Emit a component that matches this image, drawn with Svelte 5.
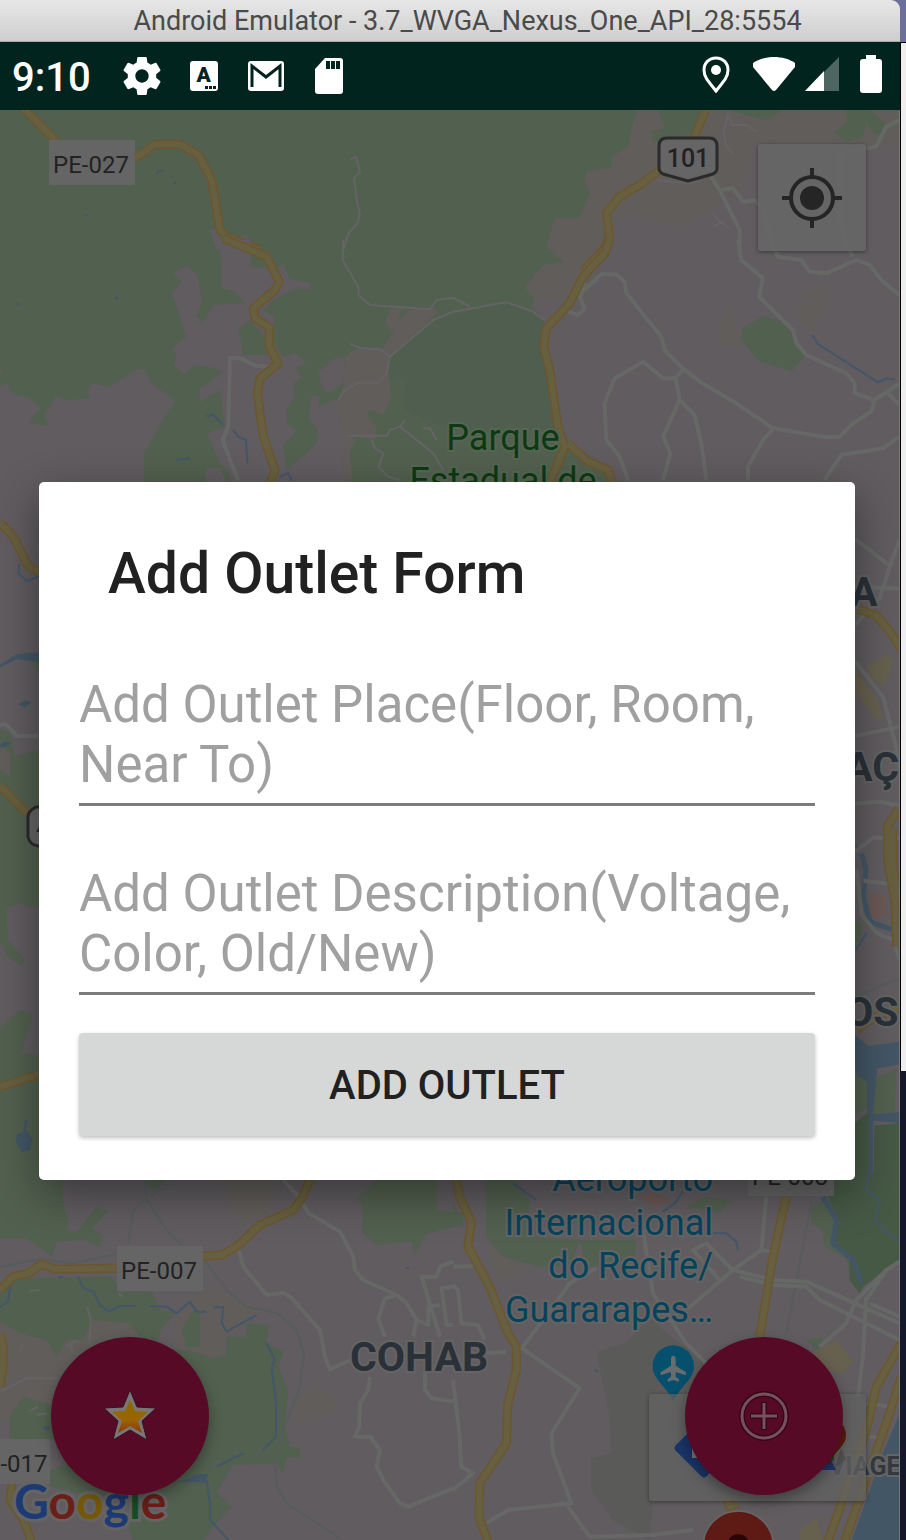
<script>
  let place = $state('');
  let description = $state('');

  // Map artwork, split into sheets. Each sheet keeps its own drawing units.
  const sheets = [
    {
      at: 'translate(0 0) scale(.3333)',
      fills: [
        ['green', 'M0 320L1915 320 1914 340 1899 370 1884 440 1834 470 1839 500 1759 515 1754 550 1771 575 1739 655 1664 655 1657 690 1639 740 1694 788 1674 805 1634 792 1574 860 1604 890 1599 925 1634 960 1621 1050 1649 1110 1680 1290 1710 1330 1840 1410 1840 1460 0 1460Z'],
        ['park', 'M1170 1075L1300 960 1519 907 1634 960 1624 1050 1679 1290 1359 1290 1210 1230 1220 1140 1165 1140Z'],
        ['sand', 'M1914 325L2699 325 2699 440 2259 430 2229 560 2049 680 1919 650 1859 660 1759 900 1604 900 1574 860 1634 792 1694 788 1639 740 1664 655 1739 655 1771 575 1754 550 1759 515 1839 500 1834 470 1884 440 1899 370Z'],
        ['green', 'M1975 330L2100 330 2080 400 1960 430 1955 395 1995 385Z'],
        ['land', 'M630 690L655 685 685 715 740 705 765 740 750 760 650 750Z']
      ],
      thin: ['M1050 480L1068 470 1080 515 1062 535 1072 610 1080 640 1072 670 1045 700 1030 750'],
      minor: [], rail: [],
      water: ['M470 522L478 512 490 512', 'M522 545L528 552', 'M255 644L265 648'],
      major: ['M65 320L165 420 230 500', 'M405 475L465 433 540 433 595 465 635 540 660 690 680 710 780 750']
    },
    {
      at: 'translate(453 0) scale(.3333)',
      fills: [
        ['green', 'M830 330L990 330 940 360 880 345Z'],
        ['green', 'M1180 330L1250 330 1310 380 1270 405 1240 370 1230 410 1185 425 1140 400 1185 365Z']
      ],
      thin: ['M825 340L812 400 820 440 840 460M825 350L840 375 880 375 910 395M610 540L700 550 740 545', 'M780 640L800 665 830 685M780 680L810 665'],
      minor: ['M775 530L805 580 860 690 860 770', 'M805 570L840 565 870 605 905 600 930 630 950 700 975 770', 'M1340 360L1300 380 1270 440 1160 460 1160 650 1180 730 1200 770'],
      rail: [], water: [],
      major: ['M762 320L718 425 620 510 560 555 500 590 460 640 470 710 455 745 390 815']
    },
    {
      at: 'translate(0 240) scale(.3333)',
      fills: [
        ['land', 'M0 440L20 430 40 465 75 468 125 500 85 548 145 558 133 525 168 468 200 480 275 475 258 455 280 428 328 442 410 388 432 388 455 432 528 482 500 520 432 640 432 750 0 750Z'],
        ['land', 'M520 98L560 78 595 105 606 190 590 225 608 250 640 195 735 190 705 155 665 145 662 20 650 0 750 0 755 80 800 85 850 75 870 115 930 128 932 150 885 145 820 180 790 210 825 232 815 300 850 350 885 340 920 365 885 385 905 410 883 430 880 480 860 505 860 550 892 570 850 615 860 690 950 610 950 560 925 535 935 465 958 468 955 500 1015 475 1035 750 700 750 690 700 660 670 620 580 675 560 660 450 600 487 600 445 668 400 640 383 582 375 555 403 520 375 530 350 518 325 558 290 515 155 545 125Z'],
        ['green', 'M715 265L750 240 800 300 800 345 730 345 722 300Z'],
        ['land', 'M955 395L1005 355 1035 352 1030 430 985 460 965 440Z'],
        ['land', 'M610 750L620 685 660 685 690 750Z'],
        ['sand', 'M1145 328L1180 280 1155 250 1170 205 1205 205 1195 240 1230 210 1300 200 1310 220 1170 350 1165 400 1175 470 1150 525 1110 510 1100 530 1130 560 1125 600 1070 590 1050 640 1060 740 1035 740 1020 560 1015 480 1030 440 1035 350 1070 325Z'],
        ['land', 'M0 388L12 392 0 400Z']
      ],
      thin: [
        'M1030 0L1028 60 1075 140 1075 165 1110 195 1290 208 1310 180 1359 173 1409 200',
        'M1634 240L1594 212 1519 187 1359 215 1300 240 1170 350 1140 328 1085 325 1050 312M1170 350L1160 400 1135 428 1075 428 1030 455 1015 480',
        'M1040 587L1160 587 1170 570 1200 560 1215 540M1200 560L1250 600 1300 640 1330 690M1115 600L1125 625 1150 640 1135 680 1165 710 1200 720M1270 565L1290 565 1310 600'
      ],
      minor: ['M715 720L690 660 668 600 685 560 690 355 720 355 770 378 815 380'],
      rail: [],
      water: ['M618 528L640 525 670 555M700 570L715 590 738 600 742 670M530 660L570 655M838 710L865 700 875 720', 'M50 188L55 196M345 175L355 172'],
      major: ['M670 -5L730 20 800 50 838 125 825 150 760 205 765 235 808 262 808 320 835 370 780 415 772 460 790 590 825 690 810 730']
    },
    {
      at: 'translate(453 240) scale(.3333)',
      fills: [
        ['green', 'M870 265L930 228 985 245 1020 285 1055 350 1015 393 920 365 865 300Z'],
        ['sand', 'M830 190L865 325 790 315Z'],
        ['sand', 'M1020 160L1130 135 1130 195 1075 280 1015 205 1090 190Z']
      ],
      thin: [],
      minor: [
        'M855 0L865 60 930 115 918 170 1020 270 1030 310 1060 345 1180 400 1205 430 1205 460 1265 480 1340 430',
        'M950 0L975 50 1045 60 1070 95 1120 100 1210 60 1250 75 1290 125 1340 165',
        'M395 150L445 103 490 103 515 125 520 160 625 290 635 330 690 385 740 425 850 490 960 565 1120 592 1160 590 1200 550 1255 515 1265 480',
        'M345 215L375 225 395 205 380 170 400 130',
        'M525 720L500 650 460 600 455 490 485 415 570 365 630 415 665 415 690 390',
        'M668 415L680 480 630 590 652 640 630 720M680 480L725 525 745 610 760 720',
        'M960 568L930 600 885 680 885 720M1340 590L1290 625 1165 645 1115 720M1300 455L1340 495'
      ],
      rail: [],
      water: ['M1078 285L1095 312 1275 427 1300 415 1325 418'],
      major: ['M470 0L455 40 390 110 350 190 280 265 272 320 290 390 315 560 335 620 290 730', 'M345 610L405 665 465 690 478 730']
    },
    {
      at: 'translate(0 480) scale(.3333 .4529)',
      fills: [
        ['green', 'M0 550L30 560 45 610 118 595 200 600 200 900 110 945 60 935 20 945 22 1010 0 1030Z'],
        ['green', 'M0 1010L30 1020 75 1060 65 1075 20 1050Z'],
        ['green', 'M0 1210L60 1170 100 1180 65 1265 118 1270 190 1280 190 1568 0 1568Z'],
        ['sand', 'M0 590L30 600 30 655 0 640Z'],
        ['green', 'M90 405L118 380 118 425Z'],
        ['lake', 'M0 408L50 385 118 380 118 402 50 396 0 414Z'],
        ['lake', 'M55 495L75 487 95 490 75 503Z'],
        ['lake', 'M0 585L15 577 35 580 15 590 0 590Z'],
        ['lake', 'M75 1410L83 1415 78 1435 97 1455 90 1480 65 1485 48 1460 50 1445 70 1440Z']
      ],
      thin: [],
      minor: ['M0 540L20 540 50 565 118 565'],
      rail: [],
      water: ['M58 185L55 205 80 223 118 212'],
      major: ['M0 95L40 125 85 190 118 203', 'M0 675L80 735', 'M0 1340L118 1312']
    },
    {
      at: 'translate(780 480) scale(.3333 .4529)',
      fills: [
        ['town', 'M260 410L320 385 340 400 315 455 270 440Z'],
        ['town', 'M225 420L290 480 310 530 280 525 225 465Z'],
        ['brick', 'M270 910L315 915 320 960 270 970Z'],
        ['green', 'M225 970L250 985 225 1040Z'],
        ['lake', 'M225 1225L265 1250 360 1240 360 1290 290 1300 285 1400 360 1395 360 1420 280 1415 278 1560 268 1560 265 1400 225 1300Z'],
        ['green', 'M225 1310L262 1330 262 1390 225 1400Z'],
        ['green', 'M290 1320L350 1300 345 1395 278 1400Z'],
        ['wood', 'M225 1420L265 1395 268 1568 165 1568 165 1545 225 1545Z'],
        ['wood', 'M283 1425L360 1420 360 1568 280 1568Z']
      ],
      thin: [],
      minor: ['M225 130L330 190 300 260 225 320M330 190L360 130M225 235L360 240', 'M225 400L310 480 345 580 360 640M225 565L360 545M225 715L300 710 360 720M225 820L280 790 360 790M250 885L360 895M230 860L245 960 290 1000 350 1020M340 1020L360 1060'],
      rail: ['M225 1140L360 1100'],
      water: ['M225 805L235 815M225 1040L260 1000'],
      river: ['M245 825L258 860 250 920 270 975 335 992'],
      major: ['M235 285L290 300 330 335 365 375', 'M358 725L322 765 325 850 345 930 350 1030', 'M338 770L338 850 356 930', 'M230 1212L300 1180 360 1165']
    },
    {
      at: 'translate(0 1170) scale(.3333)',
      fills: [
        ['sand', 'M660 30L830 30 800 130 720 170Z'],
        ['sand', 'M0 455L240 430 480 440 470 510 420 560 150 700 70 680 20 750 0 750Z'],
        ['sand', 'M530 430L620 350 760 400 750 460 680 500 670 560 520 540Z'],
        ['sand', 'M880 690L940 645 1020 690 980 740 890 760Z'],
        ['green', 'M0 0L185 30 190 100 205 155 200 180 230 188 290 110 325 125 275 175 310 195 300 232 255 210 170 215 155 258 80 205 0 205Z'],
        ['green', 'M0 370L40 330 95 325 330 320 360 350 460 370 480 420 525 430 490 470 470 510 420 500 390 460 280 450 250 510 200 510 170 560 140 510 60 490 0 455Z'],
        ['green', 'M545 480L580 420 600 425 600 530 560 530Z'],
        ['green', 'M440 540L560 540 640 565 680 555 680 500 740 500 740 460 805 465 800 520 850 545 835 590 865 660 855 770 870 830 900 835 900 865 860 860 850 910 830 880 700 885 650 965 695 1010 640 1070 610 1110 400 1110 385 1080Z'],
        ['green', 'M30 740L70 680 170 710 170 810 30 810Z'],
        ['green', 'M150 900L210 880 400 960 380 1000 150 950Z'],
        ['green', 'M1130 30L1310 30 1310 120 1389 130 1389 165 1280 190 1245 255 1235 215 1130 225 1085 185 1090 110 1070 85Z'],
        ['green', 'M435 30L500 30 460 65Z'],
        ['lake', 'M540 935L600 912 625 912 618 938Z'],
        ['lake', 'M125 772L150 767 150 784 138 782Z']
      ],
      thin: ['M0 665L80 625 170 625', 'M262 410L272 450 268 520M60 545L70 520M85 725L115 710M230 510L200 530M90 362L120 360M355 370L368 380M110 735L140 730M212 520L218 550'],
      minor: [
        'M850 30L900 85 925 130 970 155 1020 185 1060 260 1065 300 1090 330 1190 375 1220 400 1250 450 1240 500',
        'M1190 375L1155 385 1135 445 1155 500',
        'M1250 450L1285 465 1285 410 1320 405M1359 275L1320 290 1310 320 1265 320 1320 500M1359 350L1325 355 1340 465 1359 465',
        'M715 235L730 290 800 375 850 368 875 385 960 480 975 560 990 598 1050 570M1110 620L1105 660 1080 700 1078 770 1065 800 1110 800 1140 840 1130 890 1150 930 1200 1000 1225 1010 1359 955',
        'M1275 610L1275 660 1295 685 1359 695'
      ],
      rail: ['M435 30L440 90 500 180 550 230 620 280 680 360 740 410 830 430 890 480 912 550 900 650 850 780 825 880 830 950 860 1000 1020 1105', 'M510 40L440 85 400 120 385 220M0 290L120 268 220 280 350 252'],
      water: ['M235 320L250 355 280 365 300 405 325 425 360 408 410 408M450 408L500 410 530 430 570 395 590 425 620 425M640 412L670 412 665 460 680 485 770 435M800 520L825 570 815 590 828 700 828 800 790 840M730 850L650 890M620 930L630 1000 630 1050 685 1110M30 350L25 395 0 410M175 322L190 322M1218 292L1228 296'],
      major: ['M0 360L40 320 85 310 125 283 165 298 350 295', 'M600 260L665 255 710 230 780 165 880 120 905 85 930 30', 'M0 490L10 530 8 600 0 650', 'M35 940L30 990 70 1050 95 1115']
    },
    {
      at: 'translate(453 1170) scale(.3333)',
      fills: [
        ['field', 'M430 545L520 520 590 440 640 490 740 560 800 700 620 720 590 1110 480 1050 415 960 415 865 475 850 470 740Z'],
        ['green', 'M100 30L190 30 230 90 220 200 380 210 350 290 260 290 150 260 100 200Z'],
        ['green', 'M380 210L550 210 545 270 400 290Z'],
        ['green', 'M700 110L760 80 840 90 800 125Z'],
        ['green', 'M0 90L30 170 0 165Z'],
        ['sand', 'M100 210L150 260 220 290 170 330 120 310Z'],
        ['brick', 'M560 80L600 70 650 90 610 115Z'],
        ['green', 'M1075 110L1160 60 1190 330 1190 270 1115 230 1110 180 1075 160Z'],
        ['wood', 'M1110 30L1340 0 1340 270 1230 350 1220 370 1190 330 1190 270 1140 220 1150 150Z'],
        ['green', 'M1060 510L1110 500 1100 545Z'],
        ['town', 'M1060 560L1150 510 1200 575 1170 610 1110 600Z'],
        ['town', 'M1040 1080L1090 1040 1110 1110 1040 1110Z'],
        ['lake', 'M1345 720L1290 850 1240 990 1195 1115 1345 1115Z']
      ],
      thin: [],
      minor: [
        'M0 290L60 288M0 345L15 360 25 460 75 465 95 510M95 550L160 545M190 550L210 530 270 450 350 340 430 295M200 530L380 655 295 790 300 850 355 1000 165 1020 100 1060M345 1010L410 1100 600 1095 720 1080M0 630L20 800 25 890 60 910 0 960',
        'M940 80L925 240 840 300 700 420M840 300L760 220 720 240 800 330M570 180L600 370 700 520 760 580M840 300L960 330 1060 335 1340 460M860 320L960 345 1060 350 1100 390 1340 510M920 240L960 245',
        'M1340 275L1300 300 1210 390 1180 460 1100 530M1240 380L1230 560 1215 680M1250 400L1340 440M1240 700L1310 710M1250 800L1280 805M1300 300L1240 390'
      ],
      rail: ['M1075 100L1000 490', 'M910 950L910 1000'],
      water: ['M1250 0L1240 60 1280 90 1265 150 1335 215M780 190L820 190 850 215 855 240M690 65L665 100 630 125M180 40L250 90', 'M425 600L435 605'],
      river: ['M1110 80L1150 150 1140 220 1200 270 1225 340'],
      major: ['M10 30L20 80 55 155 45 230 110 350 165 490 190 530 190 600 165 700 160 820 80 940 78 1040 105 1115', 'M1000 80L960 260 920 500', 'M1345 520L1270 650 1240 780 1200 900 1125 1115', 'M1345 620L1300 760 1250 900 1175 1115', 'M820 980L830 1010 855 1000']
    }
  ];
</script>

<div class="desktop">
  <section class="emulator">
    <header class="titlebar">Android Emulator - 3.7_WVGA_Nexus_One_API_28:5554</header>

    <div class="statusbar">
      <div class="group left">
        <span class="clock">9:10</span>
        <svg width="38" height="38" viewBox="2 2 20 20" aria-hidden="true"><path fill="#fff" d="M19.43 12.98c.04-.32.07-.64.07-.98s-.03-.66-.07-.98l2.11-1.65c.19-.15.24-.42.12-.64l-2-3.46c-.12-.22-.39-.3-.61-.22l-2.49 1c-.52-.4-1.08-.73-1.69-.98l-.38-2.65C14.46 2.18 14.25 2 14 2h-4c-.25 0-.46.18-.49.42l-.38 2.65c-.61.25-1.17.59-1.69.98l-2.49-1c-.23-.09-.49 0-.61.22l-2 3.46c-.13.22-.07.49.12.64l2.11 1.65c-.04.32-.07.65-.07.98s.03.66.07.98l-2.11 1.65c-.19.15-.24.42-.12.64l2 3.46c.12.22.39.3.61.22l2.49-1c.52.4 1.08.73 1.69.98l.38 2.65c.03.24.24.42.49.42h4c.25 0 .46-.18.49-.42l.38-2.65c.61-.25 1.17-.59 1.69-.98l2.49 1c.23.09.49 0 .61-.22l2-3.46c.12-.22.07-.49-.12-.64l-2.11-1.65zM12 15.5c-1.93 0-3.5-1.57-3.5-3.5s1.57-3.5 3.5-3.5 3.5 1.57 3.5 3.5-1.57 3.5-3.5 3.5z" /></svg>
        <span class="badge">A<svg width="11" height="3" viewBox="0 0 11 3" aria-hidden="true"><path d="M0 0h3v3H0zM4 0h3v3H4zM8 0h3v3H8z" fill="#01241e" /></svg></span>
        <svg width="38" height="30" viewBox="0 0 38 30" aria-hidden="true"><rect x="1" width="36" height="30" rx="3" fill="#fff" /><path d="M5 26V5l14 11L33 5v21" fill="none" stroke="#01241e" stroke-width="3" /></svg>
        <svg class="card" width="30" height="38" viewBox="0 0 30 38" aria-hidden="true"><path d="M11 1h15q3 0 3 3v30q0 3-3 3H4q-3 0-3-3V12z" fill="#fff" /><path d="M12 4h4v8h-4zM17 4h4v8h-4zM22 4h4v8h-4z" fill="#01241e" /></svg>
      </div>
      <div class="group right">
        <svg width="28" height="38" viewBox="0 0 28 38" aria-hidden="true"><path d="M14 3C7 3 2 8 2 15c0 8 6 13 12 21 6-8 12-13 12-21 0-7-5-12-12-12z" fill="none" stroke="#fff" stroke-width="3" /><circle cx="14" cy="15" r="5" fill="#fff" /></svg>
        <svg class="wifi" width="44" height="36" viewBox="0 0 44 36" aria-hidden="true"><path d="M1 7C12-1 32-1 43 7v4L24 34q-2 2-4 0L1 11z" fill="#fff" /></svg>
        <svg width="36" height="36" viewBox="0 0 36 36" aria-hidden="true"><path d="M35 1v34H1z" fill="#4d6662" /><path d="M20 15v20H1z" fill="#fff" /></svg>
        <svg class="battery" width="22" height="38" viewBox="0 0 22 38" aria-hidden="true"><path d="M6 0h10v4h3q3 0 3 3v28q0 3-3 3H3q-3 0-3-3V7q0-3 3-3h3z" fill="#fff" /></svg>
      </div>
    </div>

    <main class="screen">
      <svg class="map" viewBox="0 110 900 1430" preserveAspectRatio="xMinYMin slice" role="img" aria-label="Map">
        <rect x="0" y="110" width="900" height="1430" fill="#605c60" />
        {#each sheets as sheet}
          <g transform={sheet.at}>
            {#each sheet.fills as [kind, d]}<path class={kind} {d} />{/each}
            {#each sheet.water as d}<path class="stream" {d} />{/each}
            {#each sheet.river ?? [] as d}<path class="river" {d} />{/each}
            {#each sheet.rail as d}<path class="rail" {d} />{/each}
            {#each sheet.thin as d}<path class="lane" {d} />{/each}
            {#each sheet.minor as d}<path class="street" {d} />{/each}
            {#each sheet.major as d}<path class="casing" {d} />{/each}
            {#each sheet.major as d}<path class="highway" {d} />{/each}
          </g>
        {/each}

        <g class="plate">
          <rect x="49" y="140" width="86" height="45" /><text x="91" y="173">PE-027</text>
          <rect x="117" y="1246" width="86" height="45" /><text x="159" y="1279">PE-007</text>
          <rect x="748" y="1151" width="86" height="45" /><text x="790" y="1185">PE-008</text>
          <rect x="-36" y="1439" width="86" height="45" /><text x="24" y="1472">-017</text>
        </g>
        <path class="shield" d="M667 138h42q8 0 8 8v22q0 4-4 6l-25 7-25-7q-4-2-4-6v-22q0-8 8-8z" />
        <text class="route" x="688" y="167">101</text>
        <path class="shield" d="M50 807h-14q-8 4-8 10v20q2 8 10 9h12" />
        <path d="M40 825l-4 7h4z" fill="#2b2b2b" />

        <g class="nature"><text x="503" y="450">Parque</text><text x="503" y="493">Estadual de</text></g>
        <g class="airport">
          <text x="713" y="1191">Aeroporto</text><text x="713" y="1235">Internacional</text>
          <text x="713" y="1278">do Recife/</text><text x="713" y="1322">Guararapes…</text>
        </g>
        <g class="town-name">
          <text x="350" y="1371">COHAB</text><text x="850" y="606">A</text>
          <text x="845" y="781">AÇ</text><text x="845" y="1026">OS</text>
        </g>
        <text class="district" x="829" y="1475">VIAGE</text>

        <g transform="translate(453 1170) scale(.3333)">
          <path d="M661 526a62 62 0 0 1 62 62c0 40-40 60-62 105c-22-45-62-65-62-105a62 62 0 0 1 62-62z" fill="#06506d" />
          <path d="M661 557q7 0 7 10v20l31 20v9l-31-10v14l10 8v7l-17-5-17 5v-7l10-8v-14l-31 10v-9l31-20v-20q0-10 7-10z" fill="#686c6d" />
          <circle cx="856" cy="1128" r="108" fill="#666" /><circle cx="856" cy="1128" r="103" fill="#5e1b15" /><circle cx="856" cy="1127" r="34" fill="#2a0505" />
        </g>
        <text class="brand" x="14" y="1519"><tspan fill="#1c3a73">G</tspan><tspan fill="#6c1e18">o</tspan><tspan fill="#745709">o</tspan><tspan fill="#1c3a73">g</tspan><tspan fill="#174d26">l</tspan><tspan fill="#6c1e18">e</tspan></text>
      </svg>

      <button class="tile locate" aria-label="My location">
        <svg width="60" height="60" viewBox="0 0 60 60" aria-hidden="true"><circle cx="30" cy="30" r="21" fill="none" stroke="#252525" stroke-width="4" /><circle cx="30" cy="30" r="12" fill="#252525" /><path d="M30 0v9M30 51v9M0 30h9M51 30h9" stroke="#252525" stroke-width="4" /></svg>
      </button>

      <div class="tile toolbar">
        <button aria-label="Directions"><svg width="60" height="60" viewBox="0 0 60 60" aria-hidden="true"><path d="M28 2q3-3 6 0l24 25q3 3 0 6L34 58q-3 3-6 0L3 33q-3-3 0-6z" fill="#1b3468" /><path d="M19 40V27h15v-8l11 11-11 11v-8H24v7z" fill="#777" /></svg></button>
        <button aria-label="Open in maps"><svg width="72" height="60" viewBox="0 0 72 60" aria-hidden="true"><path d="M10 8h48v34L10 56z" fill="#174d26" /><path d="M30 52l24-12 6 12z" fill="#1b3468" /><path d="M65 30l-6 20 11-9z" fill="#505050" /><path d="M53 0a17 17 0 0 1 17 17c0 12-11 14-17 30-6-16-17-18-17-30A17 17 0 0 1 53 0z" fill="#5a1a12" /></svg></button>
      </div>

      <nav class="fabs" aria-label="Outlet actions">
        <button class="fab" aria-label="Favourites">
          <svg width="56" height="56" viewBox="0 0 56 56" aria-hidden="true">
            <defs><linearGradient id="gold" x1="0" y1="0" x2="0" y2="1"><stop offset="0" stop-color="#8a6a00" /><stop offset=".6" stop-color="#9a6500" /><stop offset="1" stop-color="#8c3608" /></linearGradient></defs>
            <path d="M28 2l7 17 19 1-14 13 5 19-17-10-17 10 5-19L2 20l19-1z" fill="#777" stroke="#3a1020" stroke-width="1" />
            <path d="M28 12l5 11 13 1-10 9 4 12-12-7-12 7 4-12-10-9 13-1z" fill="url(#gold)" />
          </svg>
        </button>
        <button class="fab" aria-label="Add">
          <svg width="52" height="52" viewBox="0 0 52 52" aria-hidden="true">
            <g fill="none" stroke="#370718" stroke-width="6"><circle cx="26" cy="26" r="22" /><path d="M26 12v28M12 26h28" /></g>
            <g fill="none" stroke="#77505e" stroke-width="3"><circle cx="26" cy="26" r="22" /><path d="M26 13v26M13 26h26" /></g>
          </svg>
        </button>
      </nav>

      <div class="layer">
        <form class="dialog" onsubmit={(e) => e.preventDefault()}>
          <h1>Add Outlet Form</h1>
          <textarea rows="2" aria-label="Outlet place" placeholder="Add Outlet Place(Floor, Room, Near To)" bind:value={place}></textarea>
          <textarea rows="2" aria-label="Outlet description" placeholder="Add Outlet Description(Voltage, Color, Old/New)" bind:value={description}></textarea>
          <button class="submit">ADD OUTLET</button>
        </form>
      </div>
    </main>
  </section>
  <aside class="behind"><div class="wallpaper"></div><div class="window"></div></aside>
</div>

<style>
  :global(body) { margin: 0; background: #15182b; }
  button { font: inherit; border: 0; padding: 0; margin: 0; background: none; cursor: pointer; }
  svg { display: block; flex: none; }

  .desktop { display: flex; min-height: 100vh; font-family: Roboto, sans-serif; background: linear-gradient(#6a7099 0 42px, #15182b 42px); }
  .emulator { flex: 1; min-width: 0; display: flex; flex-direction: column; }
  .titlebar { box-sizing: border-box; height: 42px; line-height: 43px; padding-left: 35px; text-align: center; white-space: nowrap; font-size: 27px; color: #4a4a4a; background: linear-gradient(#e7e7e7, #cecece); border-bottom: 1px solid #aaa; border-top-right-radius: 9px; }

  .statusbar { height: 68px; display: flex; justify-content: space-between; align-items: center; padding: 0 18px 0 12px; background: #01241e; color: #fff; }
  .group { display: flex; align-items: center; }
  .left { gap: 27px; }
  .right { gap: 8px; padding-bottom: 4px; }
  .card { margin-left: 2px; }
  .wifi { margin-left: 14px; }
  .battery { margin-left: 12px; }
  .clock { padding: 4px 5px 0 0; font-size: 40px; font-weight: 500; line-height: 64px; }
  .badge { position: relative; width: 28px; height: 30px; margin: 0 2px; border-radius: 3px; background: #fff; color: #01241e; font-size: 21px; font-weight: 900; line-height: 28px; text-align: center; }
  .badge svg { position: absolute; right: 2px; bottom: 2px; }

  .screen { position: relative; flex: 1; display: flex; flex-direction: column; overflow: hidden; background: #605c60; border-right: 1px solid #777; }
  .map { position: absolute; inset: 0; width: 100%; height: 100%; }
  .map path { stroke-linejoin: round; }
  .green { fill: #52604f; }
  .park { fill: #4f5e4e; }
  .wood { fill: #465945; }
  .sand { fill: #605d5a; }
  .land { fill: #605c60; }
  .field { fill: #5a5a59; }
  .town { fill: #66604f; }
  .brick { fill: #6a5854; }
  .lake { fill: #435665; }
  .stream, .river, .rail, .lane, .street, .casing, .highway { fill: none; vector-effect: non-scaling-stroke; }
  .stream { stroke: #43566a; stroke-width: 2; }
  .river { stroke: #435665; stroke-width: 5; }
  .rail { stroke: #565c5c; stroke-width: 2; }
  .lane { stroke: #656366; stroke-width: 2; }
  .street { stroke: #666866; stroke-width: 4; }
  .casing { stroke: #6d562e; stroke-width: 9; }
  .highway { stroke: #665f40; stroke-width: 6; }
  .plate rect { fill: #656565; }
  .plate text { fill: #222; font-size: 24px; text-anchor: middle; }
  .shield { fill: #656565; stroke: #2b2b2b; stroke-width: 3; }
  .route { fill: #222; font-size: 25px; font-weight: 500; text-anchor: middle; }
  .nature, .airport, .town-name, .district, .brand { paint-order: stroke; stroke: #646464; stroke-width: 4; }
  .nature { fill: #0d3a12; font-size: 36px; text-anchor: middle; stroke: #566554; }
  .airport { fill: #07425c; font-size: 36px; text-anchor: end; }
  .town-name { fill: #2a3138; font-size: 41px; font-weight: 700; }
  .district { fill: #33383e; font-size: 25px; font-weight: 700; }
  .brand { font-family: Lato, sans-serif; font-size: 48px; font-weight: 700; stroke-width: 6; }

  .tile { position: absolute; right: 33px; background: rgba(102, 102, 102, .85); border-radius: 3px; box-shadow: 0 1px 4px rgba(0, 0, 0, .4); }
  .locate { top: 34px; width: 108px; height: 107px; display: grid; place-items: center; }
  .toolbar { bottom: 39px; width: 217px; height: 107px; display: grid; grid-template-columns: 1fr 1fr; background: rgba(99, 99, 99, .7); }
  .toolbar button { display: grid; place-items: center; }

  .fabs { position: absolute; left: 51px; right: 56px; bottom: 45px; display: flex; justify-content: space-between; }
  .fab { width: 158px; height: 158px; border-radius: 50%; background: #570a26; display: grid; place-items: center; box-shadow: 0 6px 14px rgba(0, 0, 0, .35); }

  .layer { position: relative; flex: 1; display: grid; align-items: center; padding: 12px 44px 0 39px; pointer-events: none; }
  .dialog { pointer-events: auto; display: flex; flex-direction: column; padding: 59px 40px 44px; background: #fff; border-radius: 5px; box-shadow: 0 14px 44px rgba(0, 0, 0, .4); }
  h1 { margin: 0 0 67px; padding-left: 29px; font-size: 57px; line-height: 66px; font-weight: 500; color: #212121; }
  textarea { display: block; box-sizing: border-box; width: 100%; height: 132px; margin: 0 0 57px; padding: 1px 0 8px; border: 0; border-bottom: 3px solid #7d7b7c; background: none; resize: none; overflow: hidden; outline: none; font-family: Roboto, sans-serif; font-size: 51px; line-height: 60px; color: #212121; }
  textarea + textarea { margin-bottom: 38px; }
  textarea::placeholder { color: #a0a0a0; opacity: 1; }
  .submit { box-sizing: border-box; height: 103px; padding-top: 2px; border-radius: 4px; background: #d6d8d7; color: #212121; font-size: 40px; font-weight: 500; box-shadow: 0 2px 4px rgba(0, 0, 0, .25); }

  .behind { flex: 0 0 6px; display: flex; flex-direction: column; }
  .wallpaper { flex: 0 0 42px; }
  .window { flex: 0 1 1028px; border: solid #000; border-width: 1px 0 0 1px; background: #eee; }
</style>
